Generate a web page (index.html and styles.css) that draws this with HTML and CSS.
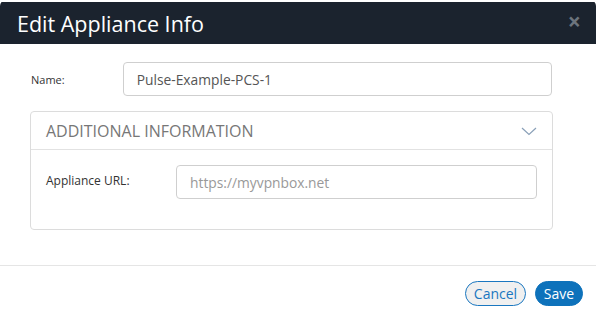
FILE: index.html
```html
<!DOCTYPE html>
<html>
<head>
<meta charset="utf-8">
<link rel="stylesheet" href="styles.css">
</head>
<body>
<div class="modal">
  <div class="modal-header">
    <h1 class="title">Edit Appliance Info</h1>
    <span class="close">×</span>
  </div>
  <div class="modal-body">
    <div class="row">
      <label class="label">Name:</label>
      <div class="input name-input">Pulse-Example-PCS-1</div>
    </div>
    <div class="panel">
      <div class="panel-head">
        <span class="panel-title">ADDITIONAL INFORMATION</span>
        <svg class="chevron" width="16" height="9" viewBox="0 0 16 9"><path d="M1 1 L8 7.5 L15 1" fill="none" stroke="#8aa0b8" stroke-width="1.2"/></svg>
      </div>
      <div class="panel-body">
        <label class="label url-label">Appliance URL:</label>
        <div class="input url-input placeholder">https://myvpnbox.net</div>
      </div>
    </div>
  </div>
  <div class="modal-footer">
    <button class="btn btn-cancel">Cancel</button>
    <button class="btn btn-save">Save</button>
  </div>
</div>
</body>
</html>
```
FILE: styles.css
```css
html, body {
  margin: 0;
  padding: 0;
  background: #fff;
}
body {
  width: 598px;
  height: 322px;
  font-family: "Open Sans", "Liberation Sans", sans-serif;
}
.modal {
  width: 596px;
  height: 321px;
  background: #fff;
  border-radius: 6px;
  overflow: hidden;
  display: flex;
  flex-direction: column;
}
.modal-header {
  background: #1b232e;
  height: 42px;
  margin-top: 2px;
  display: flex;
  align-items: center;
  justify-content: space-between;
  padding: 0 15px 0 17px;
}
.title {
  margin: 0;
  color: #fff;
  font-weight: 400;
  font-size: 21.5px;
  letter-spacing: 0;
}
.close {
  color: #6c747d;
  font-weight: 700;
  font-size: 23px;
  line-height: 1;
  margin-top: -4px;
}
.modal-body {
  padding: 18px 44px 0 30px;
  height: 203px;
}
.row {
  display: flex;
  align-items: center;
}
.label {
  font-size: 11px;
  color: #333;
}
.row .label {
  width: 92px;
  padding-left: 1px;
}
.input {
  box-sizing: border-box;
  height: 34px;
  border: 1px solid #cfcfcf;
  border-radius: 4px;
  font-size: 13.8px;
  color: #555;
  display: flex;
  align-items: center;
  padding-left: 13px;
}
.name-input {
  width: 431px;
}
.panel {
  margin-top: 15px;
  width: 523px;
  box-sizing: border-box;
  border: 1px solid #dcdcdc;
  border-radius: 4px;
  height: 119px;
}
.panel-head {
  height: 37px;
  border-bottom: 1px solid #e2e2e2;
  display: flex;
  align-items: center;
  justify-content: space-between;
  padding: 0 15px 0 15px;
}
.panel-title {
  font-size: 16px;
  color: #777;
}
.chevron {
  margin-top: 1px;
}
.panel-body {
  display: flex;
  align-items: center;
  padding: 15px 15px 0 15px;
}
.url-label {
  width: 130px;
  font-size: 12px;
  margin-top: -3px;
}
.url-input {
  width: 361px;
  color: #999;
}
.modal-footer {
  border-top: 1px solid #e5e5e5;
  flex: 1;
  display: flex;
  justify-content: flex-end;
  align-items: flex-start;
  padding: 15px 13px 0 0;
  gap: 9px;
}
.btn {
  font-family: "Open Sans", "Liberation Sans", sans-serif;
  font-size: 14px;
  height: 25px;
  border-radius: 13px;
  padding: 0;
  line-height: 21px;
  cursor: pointer;
}
.btn-cancel {
  width: 61px;
  background: #f0f0f0;
  border: 1px solid #1a77c0;
  color: #1a77c0;
}
.btn-save {
  width: 48px;
  background: #0e72bb;
  border: 1px solid #0e72bb;
  color: #fff;
}
```
